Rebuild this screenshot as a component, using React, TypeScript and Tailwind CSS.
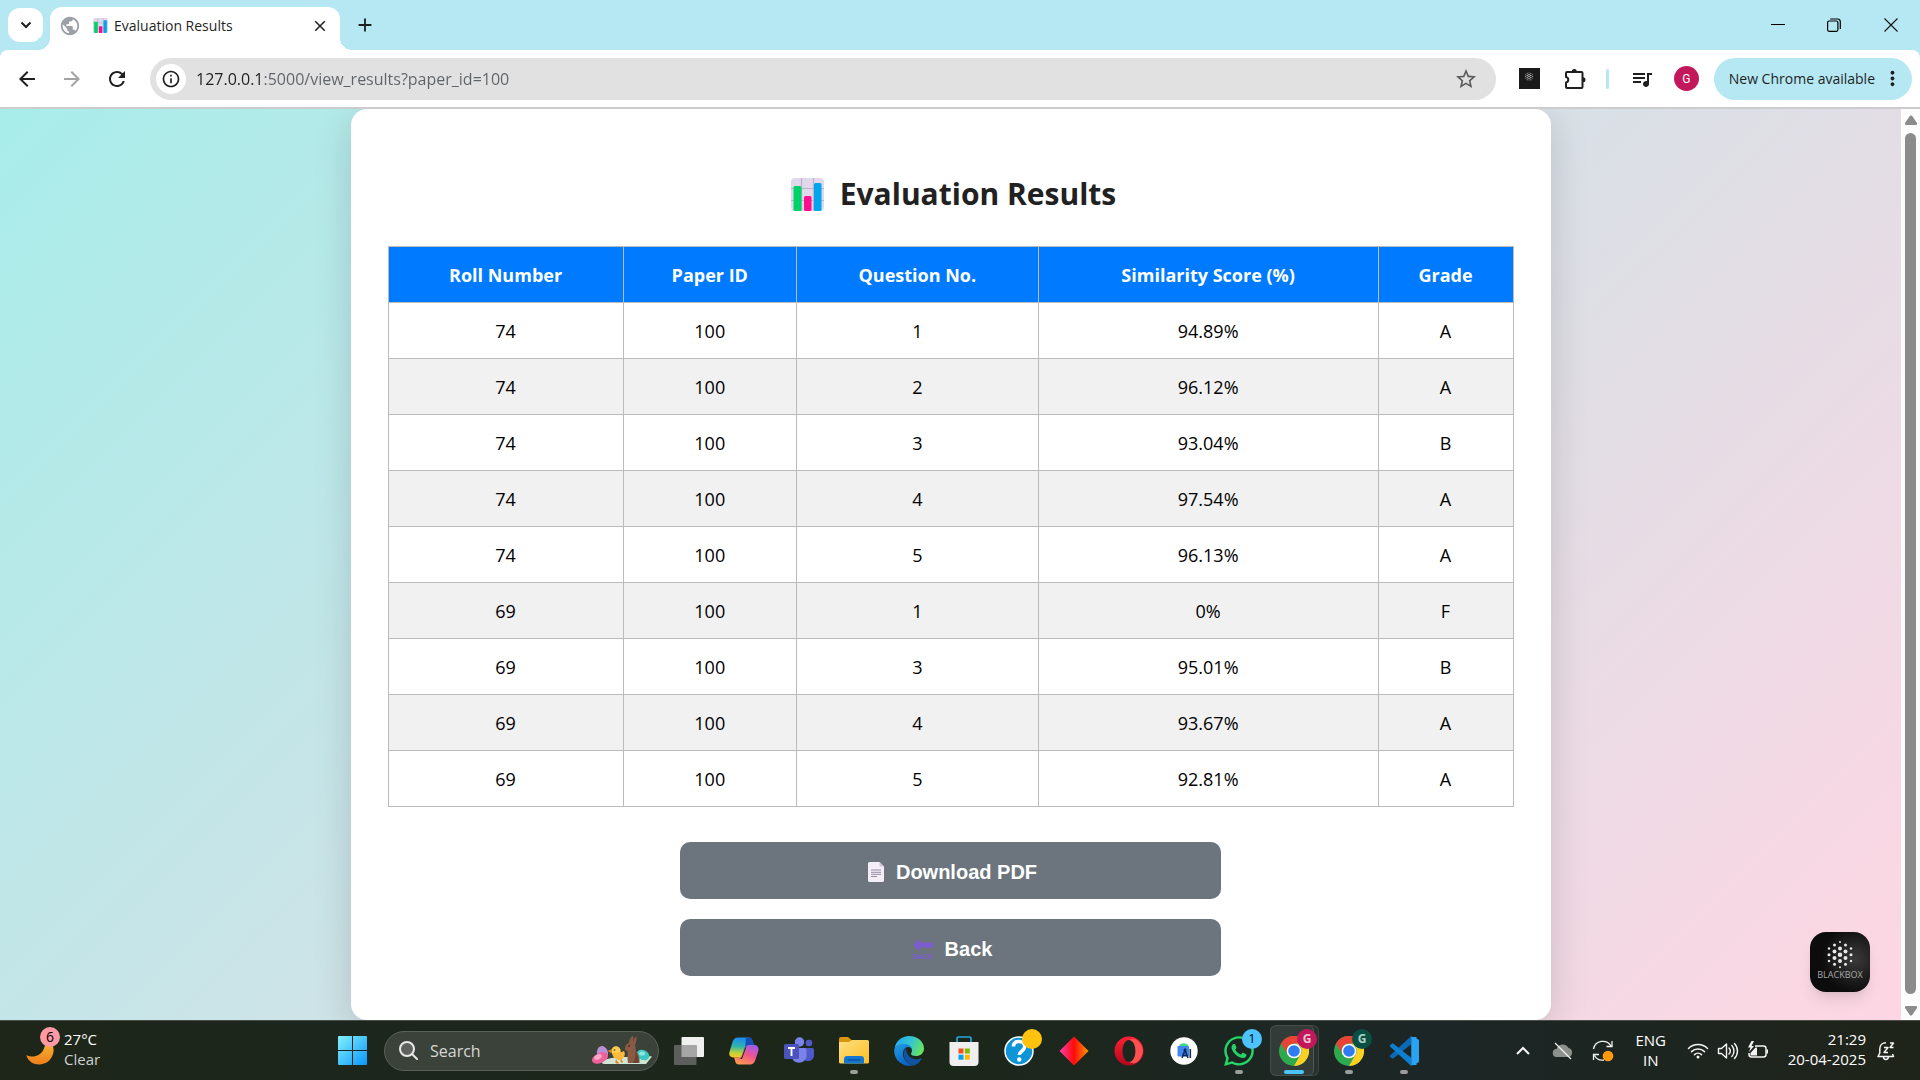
import React, { type ReactNode } from 'react';
import {
  MdAdd,
  MdArrowBack,
  MdArrowForward,
  MdClose,
  MdInfoOutline,
  MdMoreVert,
  MdPublic,
  MdQueueMusic,
  MdRefresh,
  MdStarOutline,
} from 'react-icons/md';
import { FaWhatsapp } from 'react-icons/fa';

/* ---------- Small drawings ---------- */

function ChartIcon({ className }: { className: string }) {
  return (
    <svg viewBox="0 0 33 33" className={className} aria-hidden="true">
      <rect width="33" height="33" rx="4" fill="#e1d8ec" />
      <path d="M0 10.5h33M0 22.5h33M10.5 0v33M22.5 0v33" stroke="#bdb0ca" strokeWidth="1.2" />
      <rect x="2.5" y="8" width="8" height="25" rx="1.5" fill="#00d26a" />
      <rect x="13" y="18" width="7.5" height="15" rx="1.5" fill="#fc0d8f" />
      <rect x="23" y="5" width="7.5" height="28" rx="1.5" fill="#00a6ed" />
    </svg>
  );
}

function PageIcon() {
  return (
    <svg viewBox="0 0 16 20" className="h-5 w-4" aria-hidden="true">
      <path d="M1.5 0h10L16 4.5v14a1.5 1.5 0 0 1-1.5 1.5h-13A1.5 1.5 0 0 1 0 18.500v-17A1.500 1.500 0 0 1 1.500 0z" fill="#f3eef8" />
      <path d="M11.500 0 16 4.500h-3.500a1 1 0 0 1-1-1z" fill="#cdc4d6" />
      <path d="M3 8h10M3 10.300h10M3 12.300h10M3 14.500h6" stroke="#998ea4" strokeWidth="1" />
    </svg>
  );
}

function BackIcon() {
  return (
    <svg viewBox="0 0 20 20" className="size-5" aria-hidden="true">
      <path d="M0 6 7 0v3.500h13v5H7V12z" fill="#7d5bd0" />
      <text x="10" y="19.500" textAnchor="middle" fontSize="7" fontWeight="700" fill="#7d5bd0" fontFamily="Liberation Sans, sans-serif">
        BACK
      </text>
    </svg>
  );
}

function PuzzleIcon() {
  return (
    <svg viewBox="0 0 24 24" className="size-6" fill="none" stroke="#1f1f1f" strokeWidth="2" aria-hidden="true">
      <path d="M4 5h14.500a1 1 0 0 1 1 1v14a1 1 0 0 1-1 1H4a1 1 0 0 1-1-1v-4.500a2.800 2.800 0 0 0 0-5.500V6a1 1 0 0 1 1-1z" strokeLinejoin="round" />
      <path d="M8.800 4.500a2.500 2.500 0 0 1 5 0zM20 10.300a2.500 2.500 0 0 1 0 5z" fill="#1f1f1f" stroke="none" />
    </svg>
  );
}

const hexDots: [number, number, number][] = [
  [30, 10, 1], [24.500, 13, 1.500], [35.500, 13, 1.500],
  [19, 16.500, 1.200], [30, 16.500, 2], [41, 16.500, 1.200],
  [24.500, 19.500, 2], [35.500, 19.500, 2],
  [19, 22.700, 1.500], [30, 22.700, 2.300], [41, 22.700, 1.500],
  [24.500, 26, 2], [35.500, 26, 2],
  [19, 29, 1.200], [30, 29, 2], [41, 29, 1.200],
  [24.500, 32.300, 1.500], [35.500, 32.300, 1.500], [30, 35.300, 1],
];

function HexDots({ className }: { className: string }) {
  return (
    <svg viewBox="0 0 60 60" className={className} aria-hidden="true">
      {hexDots.map(([x, y, r]) => (
        <circle key={`${x}-${y}`} cx={x} cy={y} r={r} fill="#e8e8e8" />
      ))}
    </svg>
  );
}

function MoonIcon() {
  return (
    <svg viewBox="0 0 28 28" className="size-7" aria-hidden="true">
      <defs>
        <linearGradient id="moon" x1="0" y1="0" x2="0" y2="1">
          <stop offset="0" stopColor="#f9c23c" />
          <stop offset="1" stopColor="#ef7d1a" />
        </linearGradient>
      </defs>
      <path d="M20 0c6 4 9 11 7 17-2 7-8 10.500-14 10.500C7.500 27.500 2 24.500.300 18c7 3.500 14 .5 17-5 2-4 3-9 2.700-13z" fill="url(#moon)" />
    </svg>
  );
}

function StartIcon() {
  return (
    <svg viewBox="0 0 29 29" className="size-[29px]" aria-hidden="true">
      <defs>
        <linearGradient id="start" x1="0" y1="0" x2="1" y2="1">
          <stop offset="0" stopColor="#83f1fc" />
          <stop offset="1" stopColor="#0a96fb" />
        </linearGradient>
      </defs>
      <path d="M1 0h13v14H0V1a1 1 0 0 1 1-1zM15 0h13a1 1 0 0 1 1 1v13H15zM0 15h14v14H1a1 1 0 0 1-1-1zM15 15h14v13a1 1 0 0 1-1 1H15z" fill="url(#start)" />
    </svg>
  );
}

function EasterArt() {
  return (
    <svg viewBox="0 0 60 30" className="h-[30px] w-[60px] shrink-0" aria-hidden="true">
      <path d="M10 27c0-4 12-6 24-6s22-1 26-.5L54 28H18c-5 0-8 0-8-1z" fill="#cfe6d4" />
      <ellipse cx="10.500" cy="17" rx="5.500" ry="7" fill="#b98fd6" transform="rotate(-15 10.500 17)" />
      <ellipse cx="8" cy="22" rx="8.500" ry="5" fill="#f0609b" transform="rotate(-25 8 22)" />
      <ellipse cx="6" cy="21" rx="4" ry="2.500" fill="#f9a9c9" transform="rotate(-25 6 21)" />
      <ellipse cx="51" cy="19" rx="6.500" ry="5" fill="#3cc7c0" transform="rotate(25 51 19)" />
      <ellipse cx="50" cy="17.500" rx="3" ry="2" fill="#8fe8e0" />
      <circle cx="24" cy="15" r="4.700" fill="#ffcf4d" />
      <path d="M20 17c2 0 8 0 12-2 2 3 0 9-5 9-4 0-6-3-7-7z" fill="#fdb93c" />
      <path d="m19 14-2.500 1 2.500 1.500zM24 24v3h3M29 23v3h2" stroke="#e8811c" strokeWidth="1" fill="#e8811c" />
      <circle cx="22.500" cy="14" r=".8" fill="#3a2a18" />
      <path d="M37 7c0-3 2-7 4-7 .8 2 .5 4 .200 6C42 3 43 1 44.500.500 45 4 44 7 43 9c1 2 .5 4 1 6 3 3 4 8 3.500 12H36c-1-5 0-9-.5-12-2-.5-3-1.500-2.500-3C33.500 9 35 7.500 37 7z" fill="#8a5a44" />
      <path d="M43 15c3 3 4 8 3.500 12H41c2-4 3-8 2-12z" fill="#6d4332" />
      <circle cx="37" cy="10" r=".8" fill="#2a1a12" />
    </svg>
  );
}

function TaskViewIcon() {
  return (
    <svg viewBox="0 0 30 28" className="h-7 w-[30px]" aria-hidden="true">
      <rect x="7.500" width="22.500" height="20" rx="1" fill="#f0f0f0" />
      <rect y="8" width="22.500" height="20" rx="1" fill="#5d5f5d" />
      <rect x="7.500" y="8" width="15" height="12" fill="#a6a6a6" />
    </svg>
  );
}

function CopilotIcon() {
  return (
    <svg viewBox="0 0 30 28" className="h-7 w-[30px]" aria-hidden="true">
      <defs>
        <linearGradient id="copA" x1=".3" y1="0" x2=".2" y2="1">
          <stop offset="0" stopColor="#1b8cf2" />
          <stop offset=".45" stopColor="#31b6a8" />
          <stop offset=".75" stopColor="#b8d33a" />
          <stop offset="1" stopColor="#ffc72b" />
        </linearGradient>
        <linearGradient id="copB" x1=".8" y1="0" x2=".3" y2="1">
          <stop offset="0" stopColor="#9a5cf0" />
          <stop offset=".5" stopColor="#f2558f" />
          <stop offset="1" stopColor="#ff9a4d" />
        </linearGradient>
      </defs>
      <path d="M20 8h5c3 0 5 2 4.500 5.500l-3 9c-1 3.500-2.500 5-6 5H10c-2.500 0-3.500-1.500-4-4l-1-3h4c2 0 3.500-1 4-3l2.500-6c.7-2.300 2-3.500 4.500-3.500z" fill="url(#copB)" />
      <path d="M9 .5h11c2 0 3 1.500 3.500 3.500L25 8h-5c-2.500 0-3.800 1.200-4.500 3.500L13 18c-.7 2-2 2.500-4 2.500H5c-3.500 0-5.500-2-4.500-5.500l3-10C4.500 2 6 .5 9 .5z" fill="url(#copA)" />
      <path d="M17 .5h3c2 0 3 1.500 3.500 3.500L25 8h-5c-2 0-3 .7-3.800 2z" fill="#164fb6" />
      <path d="M17.500 9.500 13 22h-2.500c1.500-.5 2.300-2 3-4l2.500-7q.5-1 1.500-1.500z" fill="#1c2719" />
    </svg>
  );
}

function TeamsIcon() {
  return (
    <svg viewBox="0 0 30 28" className="h-7 w-[30px]" aria-hidden="true">
      <circle cx="15.500" cy="5" r="4.700" fill="#7b83eb" />
      <circle cx="25" cy="6" r="3.300" fill="#5059c9" />
      <path d="M20 11h8.500a1.500 1.500 0 0 1 1.500 1.500V18c0 4-3 6-6 6-2 0-3-.5-4-1.500z" fill="#5059c9" />
      <path d="M9 11h12a1.500 1.500 0 0 1 1.500 1.500V20a7.800 7.800 0 0 1-15 0v-7.500A1.500 1.500 0 0 1 9 11z" fill="#7b83eb" />
      <rect y="7" width="15" height="15" rx="1.500" fill="#4b53bc" />
      <path d="M4 11h7M7.500 11v8" stroke="#fff" strokeWidth="1.900" />
    </svg>
  );
}

function FolderIcon() {
  return (
    <svg viewBox="0 0 30 27" className="h-[27px] w-[30px]" aria-hidden="true">
      <defs>
        <linearGradient id="folder" x1="0" y1="0" x2="1" y2="1">
          <stop offset="0" stopColor="#ffe082" />
          <stop offset="1" stopColor="#fbbf24" />
        </linearGradient>
      </defs>
      <path d="M0 2a2 2 0 0 1 2-2h7l3.500 3H28v6H0z" fill="#d9960d" />
      <path d="M0 5h10l3-2h15.500A1.500 1.500 0 0 1 30 4.500V25a1.500 1.500 0 0 1-1.500 1.500h-27A1.500 1.500 0 0 1 0 25z" fill="url(#folder)" />
      <path d="M5 26.500V22a3 3 0 0 1 3-3h14a3 3 0 0 1 3 3v4.500z" fill="#1377d1" />
      <path d="M8.500 23h13" stroke="#0b4a8b" strokeWidth="1.200" />
    </svg>
  );
}

function EdgeIcon() {
  return (
    <svg viewBox="0 0 30 30" className="size-[30px]" aria-hidden="true">
      <defs>
        <linearGradient id="edgeTop" x1="0" y1=".2" x2="1" y2=".5">
          <stop offset="0" stopColor="#27a5ee" />
          <stop offset=".5" stopColor="#2fc3d8" />
          <stop offset="1" stopColor="#6ae35f" />
        </linearGradient>
        <linearGradient id="edgeLeft" x1="0" y1="0" x2=".6" y2="1">
          <stop offset="0" stopColor="#1ea0e6" />
          <stop offset="1" stopColor="#0c5fc4" />
        </linearGradient>
      </defs>
      <path d="M.5 13C1.500 5 8 0 15 0c9 0 15 6 15 12.500 0 5-4 7.500-8 7.500-3 0-5-1-5-2.300 0-.8 1-1.300 1-3.200C18 11 14.500 8.500 10 8.500c-5 0-8.500 2-9.500 4.500z" fill="url(#edgeTop)" />
      <path d="M.3 13.500C1 10.500 4.500 8 9.500 8c4.500 0 8.500 2 8.500 6 0-1.500-1.700-3-4-3-3 0-5 3-5 7 0 6 5 9.500 9.500 11.500A15 15 0 0 1 .3 13.500z" fill="url(#edgeLeft)" />
      <path d="M12 12c-4 4-3 15 7 17.500 4-.5 7-3.500 8.500-6.500.3-.6-.3-1-.8-.7C21 25 12.500 22 12 12z" fill="#12539f" />
    </svg>
  );
}

function StoreIcon() {
  return (
    <svg viewBox="0 0 30 30" className="size-[30px]" aria-hidden="true">
      <path d="M8 8V2.500A1.500 1.500 0 0 1 9.500 1h11A1.500 1.500 0 0 1 22 2.500V8" fill="none" stroke="#29a9e0" strokeWidth="1.700" />
      <path d="M.5 6h29v20a4 4 0 0 1-4 4h-21a4 4 0 0 1-4-4z" fill="#efefef" />
      <path d="M9.500 12.500h5v5h-5z" fill="#f25022" />
      <path d="M15.800 12.500h5v5h-5z" fill="#7fba00" />
      <path d="M9.500 18.700h5v5h-5z" fill="#00a4ef" />
      <path d="M15.800 18.700h5v5h-5z" fill="#ffb900" />
    </svg>
  );
}

function HelpIcon() {
  return (
    <svg viewBox="0 0 30 30" className="size-[30px]" aria-hidden="true">
      <circle cx="15" cy="15" r="14" fill="#0d95d8" stroke="#fff" strokeWidth="1.500" />
      <path d="M9.500 10.500C9.500 7 12 5.500 15 5.500s5.700 1.800 5.700 5c0 4.500-5.500 4.500-5.500 8.500" fill="none" stroke="#fff" strokeWidth="3.500" />
      <circle cx="15.200" cy="23.500" r="2.200" fill="#fff" />
    </svg>
  );
}

function DiamondIcon() {
  return (
    <svg viewBox="0 0 30 30" className="size-[30px]" aria-hidden="true">
      <defs>
        <linearGradient id="diamond" x1="0" y1="0" x2="1" y2="0">
          <stop offset="0" stopColor="#ff3fae" />
          <stop offset=".5" stopColor="#ff0a0a" />
          <stop offset="1" stopColor="#ff9a00" />
        </linearGradient>
      </defs>
      <path d="m15 .5 14.500 14.500L15 29.500.5 15z" fill="url(#diamond)" />
    </svg>
  );
}

function OperaIcon() {
  return (
    <svg viewBox="0 0 30 30" className="size-[30px]" aria-hidden="true">
      <defs>
        <linearGradient id="opera" x1="0" y1="0" x2="0" y2="1">
          <stop offset="0" stopColor="#ff2233" />
          <stop offset="1" stopColor="#b3061b" />
        </linearGradient>
      </defs>
      <path d="M15 .5a14.500 14.500 0 1 0 0 29 14.500 14.500 0 0 0 0-29zM15 4c4 0 6.500 5 6.500 11S19 26 15 26 8.500 21 8.500 15 11 4 15 4z" fill="url(#opera)" fillRule="evenodd" />
      <path d="M15 4c3-2 6-1.500 9 1 6 5 7 14 0 20.500-3 2.500-6 2.500-9 .5 4 0 6.500-5 6.500-11S19 4 15 4z" fill="#ff5151" />
    </svg>
  );
}

function AndroidStudioIcon() {
  return (
    <svg viewBox="0 0 28 28" className="size-7" aria-hidden="true">
      <circle cx="14" cy="14" r="13.700" fill="#fff" />
      <path d="M9 9a5 4 0 0 1 9.500 0z" fill="#3ddc84" />
      <rect x="7.500" y="9" width="11.500" height="10.500" rx="1" fill="#4285f4" />
      <path d="m12 21 3-8 3 8M13.300 18.500h3.500M20.300 12v9" fill="none" stroke="#0b2b52" strokeWidth="1.600" />
      <circle cx="15" cy="13" r="1.500" fill="#0b2b52" />
    </svg>
  );
}

function ChromeIcon() {
  return (
    <svg viewBox="0 0 30 30" className="size-[30px]" aria-hidden="true">
      <circle cx="15" cy="15" r="15" fill="#2da94f" />
      <path d="M2 7.500A15 15 0 0 1 28 7.500H15A7.500 7.500 0 0 0 8.500 18.800z" fill="#ea4335" />
      <path d="M28 7.500A15 15 0 0 1 15 30l6.500-11.200A7.500 7.500 0 0 0 15 7.500z" fill="#fdd023" />
      <circle cx="15" cy="15" r="7.300" fill="#fff" />
      <circle cx="15" cy="15" r="5.800" fill="#2f7bf0" />
    </svg>
  );
}

function CodeIcon() {
  return (
    <svg viewBox="0 0 30 30" className="size-[30px]" aria-hidden="true">
      <path d="M1 19.500 22 .2 22.500 8 4.500 22.300c-.5.400-1.200.400-1.600 0L.8 20.600a.8.8 0 0 1 .2-1.100z" fill="#0b6bb8" />
      <path d="M1 10.500 22 29.800l.5-7.800L4.500 7.700c-.5-.4-1.200-.4-1.600 0L.8 9.400a.8.8 0 0 0 .2 1.100z" fill="#0f7fcf" />
      <path d="M22 .2 29 3.300a1.500 1.500 0 0 1 1 1.400v20.600a1.500 1.500 0 0 1-1 1.400l-7 3.100c-.7.300-1.300 0-1.300-.3 1 .5 1.800 0 1.800-1V1.500c0-1-.8-1.500-1.800-1C20.700.2 21.300-.1 22 .2z" fill="#29a3f2" />
      <path d="M22.500 1h5v28h-5z" fill="#29a3f2" />
    </svg>
  );
}

function CloudOffIcon() {
  return (
    <svg viewBox="0 0 22 20" className="h-5 w-[22px]" aria-hidden="true">
      <path d="M5 16a4 4 0 0 1-.5-8A6.500 6.500 0 0 1 16.500 7 4.700 4.700 0 0 1 17 16z" fill="#8c918c" />
      <path d="m3 2 16 16" stroke="#f2f2f2" strokeWidth="1.300" />
    </svg>
  );
}

function SyncIcon() {
  return (
    <svg viewBox="0 0 22 22" className="size-[22px]" fill="none" stroke="#f2f2f2" strokeWidth="1.300" aria-hidden="true">
      <path d="M1.500 9A9.500 9.500 0 0 1 19 6M20 1v5.500h-5.500M1.500 20v-5.500H7M2.500 15.500A9 9 0 0 0 12 20" />
      <circle cx="16" cy="16" r="5.300" fill="#ff9a0a" stroke="none" />
    </svg>
  );
}

function WifiIcon() {
  return (
    <svg viewBox="0 0 22 18" className="h-[18px] w-[22px]" fill="none" stroke="#f5f5f5" strokeWidth="1.500" strokeLinecap="round" aria-hidden="true">
      <path d="M1.500 6.500a13.500 13.500 0 0 1 19 0M4.500 9.600a9.200 9.200 0 0 1 13 0M7.500 12.600a5 5 0 0 1 7 0" />
      <circle cx="11" cy="15" r="1.500" fill="#f5f5f5" stroke="none" />
    </svg>
  );
}

function VolumeIcon() {
  return (
    <svg viewBox="0 0 22 20" className="h-5 w-[22px]" fill="none" stroke="#f5f5f5" strokeWidth="1.400" strokeLinecap="round" strokeLinejoin="round" aria-hidden="true">
      <path d="M1.500 7.500h3l5-4.500v14l-5-4.500h-3zM12 7a4.500 4.500 0 0 1 0 6M14.800 4.500a8 8 0 0 1 0 11M17.500 2.500a11 11 0 0 1 0 15" />
    </svg>
  );
}

function BatteryIcon() {
  return (
    <svg viewBox="0 0 22 20" className="h-5 w-[22px]" aria-hidden="true">
      <path d="M8 5h8.500A2.500 2.500 0 0 1 19 7.500v6a2.500 2.500 0 0 1-2.500 2.500h-12A2.500 2.500 0 0 1 2 13.500V12" fill="none" stroke="#f5f5f5" strokeWidth="1.500" />
      <path d="M19.500 8.500h1.500v4h-1.500zM3.500 12l5-5.500h1.500V14.500H3.500z" fill="#f5f5f5" />
      <path d="M4.500 0 1 6.500h2.500L2 11l5-6H4.500L7 0z" fill="#f5f5f5" />
    </svg>
  );
}

function BellSnoozeIcon() {
  return (
    <svg viewBox="0 0 20 20" className="size-5" fill="none" stroke="#f5f5f5" strokeWidth="1.500" strokeLinejoin="round" aria-hidden="true">
      <path d="M10 1.800c-4 0-6.200 2.700-6.200 6.200v4L2 15.500h15.500l-1-2.500M7.500 16a2.400 2.400 0 0 0 4.800 0" />
      <path d="M8 6.500h4l-4 5h4M14 2h3.500L14 6.500h3.500" strokeWidth="1.400" />
    </svg>
  );
}

/* ---------- Browser window ---------- */

function TitleBar() {
  return (
    <header className="flex h-[50px] items-end bg-[#b5e8f3]">
      <button type="button" aria-label="Search tabs" className="mb-2 ml-2 flex h-[34px] w-[35px] items-center justify-center rounded-xl bg-white">
        <svg viewBox="0 0 12 8" className="h-2 w-3" fill="none" stroke="#1f1f1f" strokeWidth="2" aria-hidden="true">
          <path d="m1.500 1.500 4.500 4.500 4.500-4.500" />
        </svg>
      </button>
      <div className="relative ml-[7px] flex h-[43px] w-[290px] items-center rounded-t-xl bg-white pb-1.5 pl-[9px] pr-2.5">
        <span className="absolute -left-3 bottom-0 size-3 bg-[radial-gradient(circle_at_0_0,#b5e8f3_12px,#fff_12px)]" />
        <span className="absolute -right-3 bottom-0 size-3 bg-[radial-gradient(circle_at_100%_0,#b5e8f3_12px,#fff_12px)]" />
        <MdPublic className="size-[22px] text-[#9aa0a6]" />
        <ChartIcon className="ml-3 size-[15px]" />
        <span className="ml-1.5 text-sm text-[#1f1f1f]">Evaluation Results</span>
        <button type="button" aria-label="Close tab" className="ml-auto flex size-5 items-center justify-center text-[#1f1f1f]">
          <MdClose className="size-[18px]" />
        </button>
      </div>
      <button type="button" aria-label="New tab" className="mb-3 ml-3 flex size-[26px] items-center justify-center text-[#1f1f1f]">
        <MdAdd className="size-[22px]" />
      </button>
      <div className="ml-auto flex h-full items-center">
        <button type="button" aria-label="Minimize" className="flex h-full w-14 items-center justify-center">
          <span className="mb-0.5 h-px w-3.5 bg-black" />
        </button>
        <button type="button" aria-label="Restore" className="flex h-full w-14 items-center justify-center">
          <svg viewBox="0 0 14 14" className="size-3.5" fill="none" stroke="#000" strokeWidth="1.200" aria-hidden="true">
            <rect x=".6" y="3" width="10.300" height="10.300" rx="1.500" />
            <path d="M3.200 1h7.300a2.800 2.800 0 0 1 2.800 2.800V11" />
          </svg>
        </button>
        <button type="button" aria-label="Close window" className="flex h-full w-[58px] items-center justify-center">
          <svg viewBox="0 0 14 14" className="size-3.5" stroke="#111" strokeWidth="1.100" aria-hidden="true">
            <path d="m.5.5 13 13M13.500.5l-13 13" />
          </svg>
        </button>
      </div>
    </header>
  );
}

function ToolBar() {
  return (
    <div className="bg-[#b5e8f3]">
      <div className="flex h-[59px] items-center rounded-t-lg border-b-2 border-[#cccccc] bg-white pl-[15px] pr-2">
        <button type="button" aria-label="Back" className="text-[#1f1f1f]"><MdArrowBack className="size-6" /></button>
        <button type="button" aria-label="Forward" className="ml-[21px] text-[#a3a3a3]"><MdArrowForward className="size-6" /></button>
        <button type="button" aria-label="Reload" className="ml-[21px] text-[#1f1f1f]"><MdRefresh className="size-6" /></button>
        <div className="ml-[21px] flex h-[42px] flex-1 items-center rounded-full bg-[#e1e1e1] pl-1.5 pr-[18px]">
          <button type="button" aria-label="View site information" className="flex size-[30px] items-center justify-center rounded-full bg-white text-[#1f1f1f]">
            <MdInfoOutline className="size-5" />
          </button>
          <input
            type="text"
            aria-label="Address"
            defaultValue="127.0.0.1:5000/view_results?paper_id=100"
            className="ml-2.5 min-w-0 flex-1 bg-[linear-gradient(to_right,#1f1f1f_66px,#5f6368_66px)] bg-clip-text text-base text-transparent outline-none"
          />
          <button type="button" aria-label="Bookmark this tab" className="text-[#5a5a5a]"><MdStarOutline className="size-6" /></button>
        </div>
        <button type="button" aria-label="Blackbox" className="ml-[23px] flex size-[21px] items-center justify-center bg-[#1a1a1a]">
          <HexDots className="size-5" />
        </button>
        <button type="button" aria-label="Extensions" className="ml-[23px]"><PuzzleIcon /></button>
        <span className="ml-[19px] h-5 w-[3px] rounded-full bg-[#b5e8f3]" />
        <button type="button" aria-label="Media controls" className="ml-[21px] text-[#1f1f1f]"><MdQueueMusic className="size-6" /></button>
        <button type="button" aria-label="Profile" className="ml-5 size-[25px] rounded-full bg-[#c2185b] text-center font-['Roboto',sans-serif] text-xs text-white">G</button>
        <button type="button" className="ml-[15px] flex h-[42px] items-center gap-1.5 rounded-full bg-[#b5e8f3] pl-[15px] pr-2 text-sm text-[#1f1f1f]">
          New Chrome available
          <MdMoreVert className="size-[23px]" />
        </button>
      </div>
    </div>
  );
}

function ScrollBar() {
  return (
    <div className="flex w-[19px] flex-col items-center justify-between bg-[#fcfcfc] pt-1.5 pb-1" aria-hidden="true">
      <svg viewBox="0 0 12 10" className="h-2.5 w-3"><path d="M5 .8Q6 0 7 .8l5 7.200q.3 2-1 2H1q-1.300 0-1-2z" fill="#8b8b8b" /></svg>
      <div className="my-2 w-[11px] flex-1 rounded-full bg-[#8b8b8b]" />
      <svg viewBox="0 0 12 10" className="mt-1 h-2.5 w-3"><path d="M5 9.200q1 .8 2 0l5-7.200q.3-2-1-2H1Q-.300 0 0 2z" fill="#8b8b8b" /></svg>
    </div>
  );
}

/* ---------- Results page ---------- */

const columns = ['Roll Number', 'Paper ID', 'Question No.', 'Similarity Score (%)', 'Grade'];

const results: string[][] = [
  ['74', '100', '1', '94.89%', 'A'],
  ['74', '100', '2', '96.12%', 'A'],
  ['74', '100', '3', '93.04%', 'B'],
  ['74', '100', '4', '97.54%', 'A'],
  ['74', '100', '5', '96.13%', 'A'],
  ['69', '100', '1', '0%', 'F'],
  ['69', '100', '3', '95.01%', 'B'],
  ['69', '100', '4', '93.67%', 'A'],
  ['69', '100', '5', '92.81%', 'A'],
];

function ResultsTable() {
  return (
    <table className="mt-[30px] w-full table-fixed border-collapse text-center text-lg text-black">
      <colgroup>
        <col className="w-[20.9%]" />
        <col className="w-[15.4%]" />
        <col className="w-[21.5%]" />
        <col className="w-[30.2%]" />
        <col className="w-[12%]" />
      </colgroup>
      <thead>
        <tr className="bg-[#007bff] text-white">
          {columns.map((label) => (
            <th key={label} scope="col" className="h-14 border border-[#bbbbbb] font-bold">{label}</th>
          ))}
        </tr>
      </thead>
      <tbody>
        {results.map((row, i) => (
          <tr key={i} className="odd:bg-white even:bg-[#f1f1f1]">
            {row.map((cell, j) => (
              <td key={j} className="h-14 border border-[#bbbbbb]">{cell}</td>
            ))}
          </tr>
        ))}
      </tbody>
    </table>
  );
}

function ActionButton({ icon, children }: { icon: ReactNode; children: ReactNode }) {
  return (
    <button type="button" className="flex h-[57px] w-full items-center justify-center gap-3 rounded-[10px] bg-[#6c757d] pt-0.5 pl-1 font-['Liberation_Sans',Arial,sans-serif] text-xl font-bold text-white">
      {icon}
      {children}
    </button>
  );
}

function ResultsPage() {
  return (
    <div className="relative flex flex-1 justify-center overflow-hidden bg-[linear-gradient(135deg,#a8edea,#fed6e3)]">
      <main className="flex w-full max-w-[1200px] flex-col items-center rounded-2xl bg-white px-[37px] pb-11 pt-[63px] shadow-[0_10px_38px_rgba(0,0,0,0.15)]">
        <h1 className="flex items-center gap-4 pl-1.5 text-3xl leading-[44px] font-bold text-[#212121]">
          <ChartIcon className="size-[33px]" />
          Evaluation Results
        </h1>
        <ResultsTable />
        <div className="mt-[35px] flex w-[48%] flex-col gap-5">
          <ActionButton icon={<PageIcon />}>Download PDF</ActionButton>
          <ActionButton icon={<BackIcon />}>Back</ActionButton>
        </div>
      </main>
      <button type="button" className="absolute right-[31px] bottom-7 size-[60px] rounded-2xl bg-[radial-gradient(circle_at_75%_45%,#3a3a3a,#0c0c0c_60%)] shadow-lg">
        <HexDots className="size-[60px]" />
        <span className="absolute inset-x-0 bottom-3 text-center text-[9px] leading-[10px] text-[#a8a8a8]">BLACKBOX</span>
      </button>
    </div>
  );
}

/* ---------- Taskbar ---------- */

type App = { name: string; icon: ReactNode; badge?: ReactNode; running?: boolean; active?: boolean };

const badge = 'absolute top-2 right-1 flex size-5 items-center justify-center rounded-full text-xs leading-5';

const apps: App[] = [
  { name: 'Task view', icon: <TaskViewIcon /> },
  { name: 'Copilot', icon: <CopilotIcon /> },
  { name: 'Teams', icon: <TeamsIcon /> },
  { name: 'File Explorer', icon: <FolderIcon />, running: true },
  { name: 'Edge', icon: <EdgeIcon /> },
  { name: 'Store', icon: <StoreIcon /> },
  { name: 'Get Help', icon: <HelpIcon />, badge: <span className={`${badge} bg-[#ffc20e]`} /> },
  { name: 'Diamond', icon: <DiamondIcon /> },
  { name: 'Opera', icon: <OperaIcon /> },
  { name: 'Android Studio', icon: <AndroidStudioIcon /> },
  {
    name: 'WhatsApp',
    icon: <FaWhatsapp className="size-[34px] text-[#25d366]" />,
    badge: <span className={`${badge} bg-[#4cc2ff] text-black`}>1</span>,
    running: true,
  },
  { name: 'Chrome', icon: <ChromeIcon />, badge: <span className={`${badge} bg-[#c2185b] font-bold text-[#f0c4d4]`}>G</span>, active: true },
  { name: 'Chrome, second profile', icon: <ChromeIcon />, badge: <span className={`${badge} bg-[#0b4f43] font-bold text-[#a9d3c9]`}>G</span>, running: true },
  { name: 'Visual Studio Code', icon: <CodeIcon />, running: true },
];

function TaskbarButton({ app }: { app: App }) {
  return (
    <button type="button" aria-label={app.name} className="relative flex h-full w-[55px] items-center justify-center">
      {app.active && (
        <>
          <span className="absolute inset-y-1 left-1 w-[49px] rounded-md border border-white/10 bg-white/5" />
          <span className="absolute inset-y-1 left-1 w-11 rounded-md border-r border-white/15 bg-white/5" />
        </>
      )}
      <span className="relative">{app.icon}</span>
      {app.badge}
      {app.running && <span className="absolute bottom-1.5 h-1 w-2 rounded-full bg-[#9a9d99]" />}
      {app.active && <span className="absolute bottom-1.5 h-1 w-5 rounded-full bg-[#4cc2ff]" />}
    </button>
  );
}

function Taskbar() {
  return (
    <footer className="flex h-[60px] items-center border-t border-[#4b4f4a] bg-[linear-gradient(to_right,#1e2619,#1d261d_20%,#1c2719_45%,#1c2626_75%,#1f2419)] pr-5 text-[15px] leading-5 text-white">
      <button type="button" className="flex w-[325px] items-center gap-2.5 pl-[26px] text-left">
        <span className="relative">
          <MoonIcon />
          <span className="absolute -top-2.5 -right-1.5 size-5 rounded-full bg-[#ff99a4] text-center text-sm leading-5 text-black">6</span>
        </span>
        <span className="flex flex-col pb-1">
          <span>27°C</span>
          <span className="text-[#cfd1ce]">Clear</span>
        </span>
      </button>
      <button type="button" aria-label="Start" className="flex h-full w-[55px] items-center justify-center"><StartIcon /></button>
      <label className="mr-0.5 ml-1 flex h-10 w-[275px] items-center rounded-full border border-[#59605a] bg-[#3b4239] pr-1.5 pl-3.5">
        <svg viewBox="0 0 19 19" className="size-[19px] shrink-0" fill="none" stroke="#e8e8e8" strokeWidth="2" strokeLinecap="round" aria-hidden="true">
          <circle cx="8" cy="8" r="7" fill="#5d625c" />
          <path d="m13 13 5 5" />
        </svg>
        <input type="text" aria-label="Search" placeholder="Search" className="ml-3 min-w-0 flex-1 bg-transparent text-base text-white outline-none placeholder:text-[#d5d7d4]" />
        <EasterArt />
      </label>
      {apps.map((app) => (
        <TaskbarButton key={app.name} app={app} />
      ))}
      <div className="ml-auto flex h-full items-center">
        <button type="button" aria-label="Show hidden icons" className="flex w-10 justify-center">
          <svg viewBox="0 0 16 10" className="h-2.5 w-4" fill="none" stroke="#f5f5f5" strokeWidth="2" aria-hidden="true">
            <path d="m2 8 6-6 6 6" />
          </svg>
        </button>
        <button type="button" aria-label="OneDrive" className="flex w-10 justify-center"><CloudOffIcon /></button>
        <button type="button" aria-label="Updates" className="flex w-10 justify-center"><SyncIcon /></button>
        <button type="button" className="flex w-14 flex-col items-center pb-0.5">
          <span>ENG</span>
          <span>IN</span>
        </button>
        <button type="button" aria-label="Network, volume and battery" className="mx-1 flex items-center gap-2 px-1">
          <WifiIcon />
          <VolumeIcon />
          <BatteryIcon />
        </button>
        <button type="button" className="ml-[11px] flex flex-col items-end pb-1">
          <span>21:29</span>
          <span>20-04-2025</span>
        </button>
        <button type="button" aria-label="Notifications" className="ml-1.5 flex w-7 justify-center"><BellSnoozeIcon /></button>
      </div>
    </footer>
  );
}

export default function App() {
  return (
    <div className="flex min-h-screen flex-col font-['Open_Sans','Noto_Sans',sans-serif]">
      <TitleBar />
      <ToolBar />
      <div className="flex flex-1">
        <ResultsPage />
        <ScrollBar />
      </div>
      <Taskbar />
    </div>
  );
}
